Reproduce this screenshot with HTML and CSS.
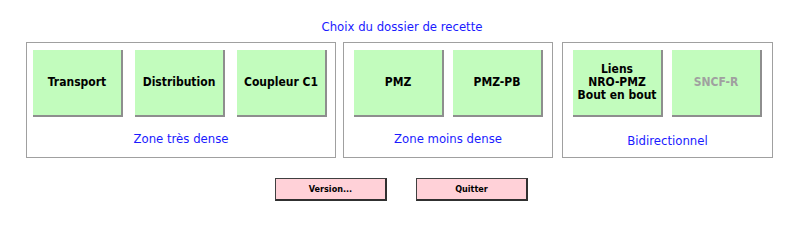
FILE: index.html
```html
<!DOCTYPE html>
<html lang="fr">
<head>
<meta charset="utf-8">
<title>Choix du dossier de recette</title>
<link rel="stylesheet" href="styles.css">
</head>
<body>
<div class="page">
  <h1 class="title">Choix du dossier de recette</h1>
  <div class="zones">
    <section class="zone zone-1">
      <div class="btns">
        <button class="tile">Transport</button>
        <button class="tile">Distribution</button>
        <button class="tile">Coupleur C1</button>
      </div>
      <div class="label">Zone très dense</div>
    </section>
    <section class="zone zone-2">
      <div class="btns">
        <button class="tile">PMZ</button>
        <button class="tile">PMZ-PB</button>
      </div>
      <div class="label">Zone moins dense</div>
    </section>
    <section class="zone zone-3">
      <div class="btns">
        <button class="tile">Liens<br>NRO-PMZ<br>Bout en bout</button>
        <button class="tile disabled">SNCF-R</button>
      </div>
      <div class="label label-low">Bidirectionnel</div>
    </section>
  </div>
  <div class="actions">
    <button class="action">Version...</button>
    <button class="action">Quitter</button>
  </div>
</div>
</body>
</html>
```

FILE: styles.css
```css
html, body {
  margin: 0;
  padding: 0;
  background: #ffffff;
}
body {
  font-family: "DejaVu Sans Condensed", "DejaVu Sans", sans-serif;
  width: 800px;
  height: 220px;
  overflow: hidden;
}
.page {
  padding-top: 18px;
}
.title {
  margin: 0;
  font-size: 13px;
  font-weight: normal;
  color: #1a1aff;
  text-align: center;
  padding-left: 4px;
  height: 24px;
  line-height: 18px;
}
.zones {
  display: flex;
  padding-left: 26px;
  gap: 7px;
}
.zone {
  box-sizing: border-box;
  height: 116px;
  border: 1px solid #a0a0a0;
  padding: 7px 0 0 6px;
  display: flex;
  flex-direction: column;
}
.zone-1 { width: 310px; }
.zone-2 { width: 210px; padding-left: 10px; }
.zone-3 { width: 211px; margin-left: 2px; padding-left: 10px; }
.btns {
  display: flex;
  gap: 12px;
}
.zone-2 .btns, .zone-3 .btns { gap: 9px; }
.tile {
  box-sizing: border-box;
  width: 90px;
  height: 67px;
  margin: 0;
  padding: 0;
  background: #c2fcbd;
  border: none;
  border-right: 2px solid #8e8e8e;
  border-bottom: 2px solid #8e8e8e;
  font-family: "DejaVu Sans Condensed", "DejaVu Sans", sans-serif;
  font-weight: bold;
  font-size: 12px;
  line-height: 13px;
  color: #000000;
}
.tile.disabled {
  color: #a0a0a0;
}
.label {
  text-align: center;
  color: #1a1aff;
  font-size: 13px;
  margin-top: 14px;
  padding-right: 6px;
}
.zone-2 .label, .zone-3 .label { padding-right: 10px; }
.label-low { margin-top: 16px; }
.actions {
  display: flex;
  padding-left: 275px;
  gap: 29px;
  margin-top: 20px;
}
.action {
  box-sizing: border-box;
  width: 112px;
  height: 23px;
  margin: 0;
  padding: 0;
  background: #ffd1d8;
  border: 1px solid #404040;
  border-right: 2px solid #303030;
  border-bottom: 2px solid #303030;
  font-family: "DejaVu Sans Condensed", "DejaVu Sans", sans-serif;
  font-weight: bold;
  font-size: 9px;
  color: #000000;
}
```
